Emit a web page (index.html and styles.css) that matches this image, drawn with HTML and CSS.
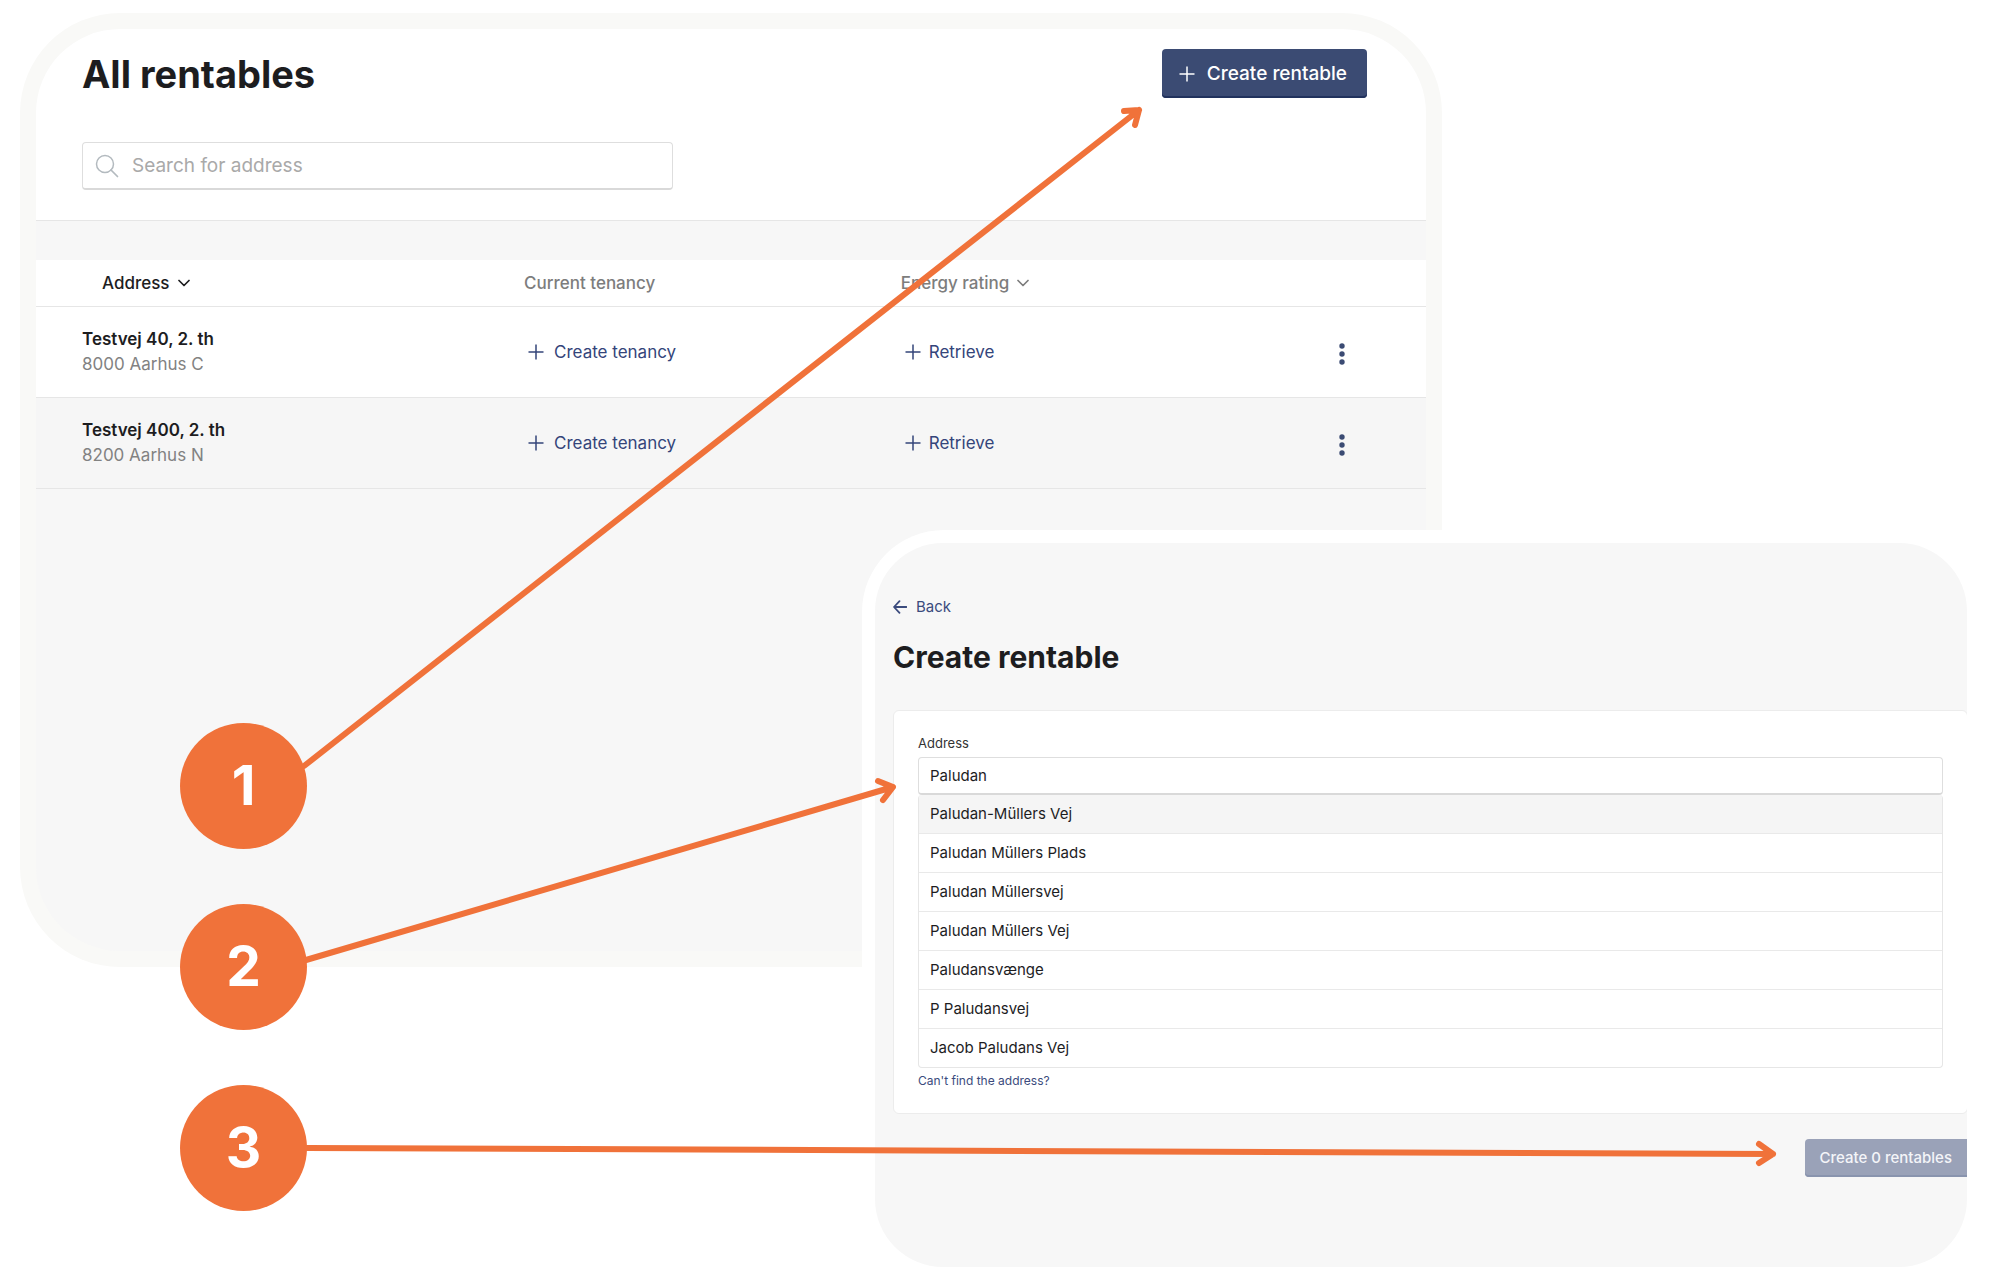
FILE: index.html
```html
<!DOCTYPE html>
<html lang="en">
<head>
<meta charset="utf-8">
<meta name="viewport" content="width=device-width, initial-scale=1">
<title>Create a rentable</title>
<link rel="stylesheet" href="styles.css">
</head>
<body>
<svg class="symbols" aria-hidden="true">
  <symbol id="plus" viewBox="0 0 16 16"><path d="M8 0.5V15.5M0.500 8H15.500" fill="none" stroke="currentColor" stroke-width="1.500"/></symbol>
  <symbol id="chevron" viewBox="0 0 12 8"><path d="M1 1.500L6 6.500L11 1.500" fill="none" stroke="currentColor" stroke-width="1.700" stroke-linecap="round" stroke-linejoin="round"/></symbol>
  <symbol id="dots" viewBox="0 0 6 24"><circle cx="3" cy="4" r="2.700"/><circle cx="3" cy="12" r="2.700"/><circle cx="3" cy="20" r="2.700"/></symbol>
</svg>
<main class="stage">
  <section class="overview">
    <div class="overview-screen">
      <header class="overview-head">
        <div class="title-row">
          <h1 class="title">All rentables</h1>
          <button class="primary" type="button"><svg class="icon-plus"><use href="#plus"/></svg>Create rentable</button>
        </div>
        <div class="search">
          <svg class="icon-search" viewBox="0 0 24 24" aria-hidden="true"><circle cx="10" cy="10" r="8.500" fill="none" stroke="currentColor" stroke-width="1.500"/><path d="M16 16L22.500 22.500" stroke="currentColor" stroke-width="1.700" stroke-linecap="round"/></svg>
          <input class="search-input" type="text" placeholder="Search for address" aria-label="Search for address">
        </div>
      </header>
      <table class="rentables">
        <thead>
          <tr>
            <th class="col-address"><button class="sort sort-active" type="button">Address<svg class="icon-chevron"><use href="#chevron"/></svg></button></th>
            <th class="col-tenancy">Current tenancy</th>
            <th class="col-energy"><button class="sort" type="button">Energy rating<svg class="icon-chevron"><use href="#chevron"/></svg></button></th>
            <th class="col-menu"></th>
          </tr>
        </thead>
        <tbody>
          <tr>
            <td><span class="street">Testvej 40, 2. th</span><span class="city">8000 Aarhus C</span></td>
            <td><a class="action action-wide" href="#"><svg class="icon-plus"><use href="#plus"/></svg>Create tenancy</a></td>
            <td><a class="action" href="#"><svg class="icon-plus"><use href="#plus"/></svg>Retrieve</a></td>
            <td class="menu-cell"><button class="menu" type="button" aria-label="More options"><svg class="icon-dots"><use href="#dots"/></svg></button></td>
          </tr>
          <tr>
            <td><span class="street">Testvej 400, 2. th</span><span class="city">8200 Aarhus N</span></td>
            <td><a class="action action-wide" href="#"><svg class="icon-plus"><use href="#plus"/></svg>Create tenancy</a></td>
            <td><a class="action" href="#"><svg class="icon-plus"><use href="#plus"/></svg>Retrieve</a></td>
            <td class="menu-cell"><button class="menu" type="button" aria-label="More options"><svg class="icon-dots"><use href="#dots"/></svg></button></td>
          </tr>
        </tbody>
      </table>
    </div>
  </section>

  <section class="create">
    <div class="create-screen">
      <a class="back" href="#"><svg class="icon-back" viewBox="0 0 14 14" aria-hidden="true"><path d="M13.500 7H1.200M6.500 1.200L1 7L6.500 12.800" fill="none" stroke="currentColor" stroke-width="1.800" stroke-linecap="round" stroke-linejoin="round"/></svg>Back</a>
      <h2 class="subtitle">Create rentable</h2>
      <form class="card">
        <label class="label" for="address">Address</label>
        <input class="address" id="address" type="text" value="Paludan">
        <ul class="options">
          <li class="option option-active">Paludan-Müllers Vej</li>
          <li class="option">Paludan Müllers Plads</li>
          <li class="option">Paludan Müllersvej</li>
          <li class="option">Paludan Müllers Vej</li>
          <li class="option">Paludansvænge</li>
          <li class="option">P Paludansvej</li>
          <li class="option">Jacob Paludans Vej</li>
        </ul>
        <a class="help" href="#">Can't find the address?</a>
      </form>
      <button class="submit" type="button">Create 0 rentables</button>
    </div>
  </section>

  <ol class="steps">
    <li class="step">1</li>
    <li class="step">2</li>
    <li class="step">3</li>
  </ol>
  <svg class="arrows" viewBox="0 0 2000 1282" preserveAspectRatio="none" aria-hidden="true">
    <path d="M304 766L1139 110M1124 111L1139 110L1135 125"/>
    <path d="M306 960L893 787M878 781L893 787L883 800"/>
    <path d="M307 1148L1773 1154M1759 1144L1773 1154L1759 1163"/>
  </svg>
</main>
</body>
</html>
```

FILE: styles.css
```css
* { box-sizing: border-box; }

body {
  margin: 0;
  background: #fff;
  color: #1d1d1f;
  font: 17px/24px Inter, "Liberation Sans", sans-serif;
}

h1, h2, ul, ol { margin: 0; padding: 0; list-style: none; }
a { text-decoration: none; }
button, input { font: inherit; margin: 0; }
svg { flex: none; }

.symbols { position: absolute; width: 0; height: 0; }

/* The two screens, the steps and the arrows share one cell and overlap. */
.stage {
  position: relative;
  display: grid;
  grid-template-columns: minmax(0, 1fr);
  min-height: 100vh;
}
.overview, .create, .steps { grid-area: 1 / 1; align-self: start; }

/* Overview screen */
.overview {
  margin: 13px 28% 0 1%;
  padding: 16px;
  margin-right: 558px;
  border-radius: 100px;
  background: #f9f9f7;
}
.overview-screen {
  min-height: 922px;
  border-radius: 84px;
  overflow: hidden;
  background: #f7f7f7;
}
.overview-head {
  padding: 20px 59px 30px 46px;
  border-bottom: 1px solid #e6e6e6;
  background: #fff;
}
.title-row {
  display: flex;
  justify-content: space-between;
  align-items: center;
  margin-bottom: 44px;
}
.title { font-size: 38px; line-height: 48px; font-weight: 700; }
.primary {
  display: flex;
  align-items: center;
  gap: 12px;
  height: 49px;
  padding: 0 20px 0 17px;
  border: 0;
  box-shadow: inset 0 -2px #21325d;
  border-radius: 4px;
  background: #3b4b73;
  color: #fff;
  font-size: 19px;
  font-weight: 500;
}
.icon-plus { width: 16px; height: 16px; }
.search {
  display: flex;
  align-items: center;
  gap: 13px;
  width: 46%;
  height: 48px;
  padding: 1px 12px 0;
  border: 1px solid #dedede;
  border-bottom: 2px solid #d9d9d9;
  border-radius: 4px;
}
.icon-search { width: 24px; height: 24px; color: #b3babf; }
.search-input {
  flex: 1;
  min-width: 0;
  padding: 0;
  border: 0;
  outline: 0;
  background: none;
  font-size: 19px;
}
.search-input::placeholder { color: #a9a9a9; opacity: 1; }

.rentables {
  width: 100%;
  margin-top: 39px;
  border-collapse: collapse;
  table-layout: fixed;
}
.rentables th, .rentables td {
  padding: 0 0 0 46px;
  border-bottom: 1px solid #e6e6e6;
  text-align: left;
}
.rentables th {
  height: 46px;
  background: #fff;
  color: #7d7d7d;
  font-weight: 500;
}
.rentables td { height: 91px; background: #fff; }
.rentables tr:nth-child(2) td { background: #f6f6f6; }
.col-address { width: 31.8%; }
.col-tenancy { width: 27.1%; }
.col-energy { width: 27.1%; }
.sort {
  display: flex;
  align-items: center;
  gap: 8px;
  padding: 0;
  border: 0;
  background: none;
  color: #7d7d7d;
  font-weight: 500;
}
.sort-active { padding-left: 20px; color: #1d1d1f; }
.icon-chevron { width: 12px; height: 8px; }
.street, .city { display: block; line-height: 25px; }
.street { font-weight: 600; }
.city { color: #828282; }
.action {
  display: flex;
  align-items: center;
  gap: 8px;
  padding-left: 4px;
  color: #34457a;
}
.action-wide { gap: 10px; }
.rentables .menu-cell { padding: 3px 81px 0 0; text-align: right; }
.menu { padding: 0; border: 0; background: none; color: #3b4b73; vertical-align: middle; }
.icon-dots { display: block; width: 6px; height: 24px; fill: currentColor; }

/* Create screen */
.create {
  margin: 530px 20px 0 862px;
  padding: 13px;
  border-radius: 82px;
  background: #fff;
}
.create-screen {
  display: flex;
  flex-direction: column;
  min-height: 724px;
  padding: 52px 0 60px 18px;
  border-radius: 68px;
  overflow: hidden;
  background: #f7f7f7;
}
.back {
  display: flex;
  align-items: center;
  gap: 9px;
  color: #3b4b7d;
  font-size: 15px;
}
.icon-back { width: 14px; height: 14px; }
.subtitle { margin: 18px 0 33px; font-size: 30px; line-height: 40px; font-weight: 700; }
.card {
  margin-right: -1px;
  padding: 20px 24px;
  border: 1px solid #ececec;
  border-radius: 6px;
  background: #fff;
}
.label { display: block; margin-bottom: 2px; font-size: 13px; color: #333; }
.address {
  display: block;
  width: 100%;
  height: 38px;
  padding: 0 11px;
  border: 1px solid #dedede;
  border-bottom: 2px solid #d9d9d9;
  border-radius: 4px;
  outline: 0;
  background: #fff;
  color: #1d1d1f;
  font-size: 15px;
}
.options { border: 1px solid #e6e6e6; border-top: 0; border-radius: 4px; overflow: hidden; }
.option { height: 39px; padding: 7px 11px; border-bottom: 1px solid #e9e9e9; font-size: 15px; }
.option:last-child { height: 38px; border-bottom: 0; }
.option-active { background: #f5f5f5; }
.help { display: block; margin-top: 1px; color: #3b4b7d; font-size: 12px; }
.submit {
  align-self: flex-end;
  height: 38px;
  margin-top: 25px;
  padding: 0 15px;
  border: 0;
  box-shadow: inset 0 -2px #8994ae;
  border-radius: 4px 0 0 4px;
  background: #9aa2b8;
  color: #f4f5f8;
  font-size: 15px;
  font-weight: 500;
}

/* Numbered steps and arrows */
.steps { display: grid; gap: 55px; margin: 723px 0 0 9%; justify-self: start; }
.step {
  display: grid;
  place-items: center;
  width: 127px;
  height: 126px;
  padding-bottom: 3px;
  border-radius: 50%;
  background: #f0723a;
  color: #fff;
  font-size: 55px;
  font-weight: 700;
}
.arrows {
  position: absolute;
  inset: 0;
  width: 100%;
  height: 100%;
  pointer-events: none;
  fill: none;
  stroke: #f0723a;
  stroke-width: 6;
  stroke-linecap: round;
  stroke-linejoin: round;
}
```
